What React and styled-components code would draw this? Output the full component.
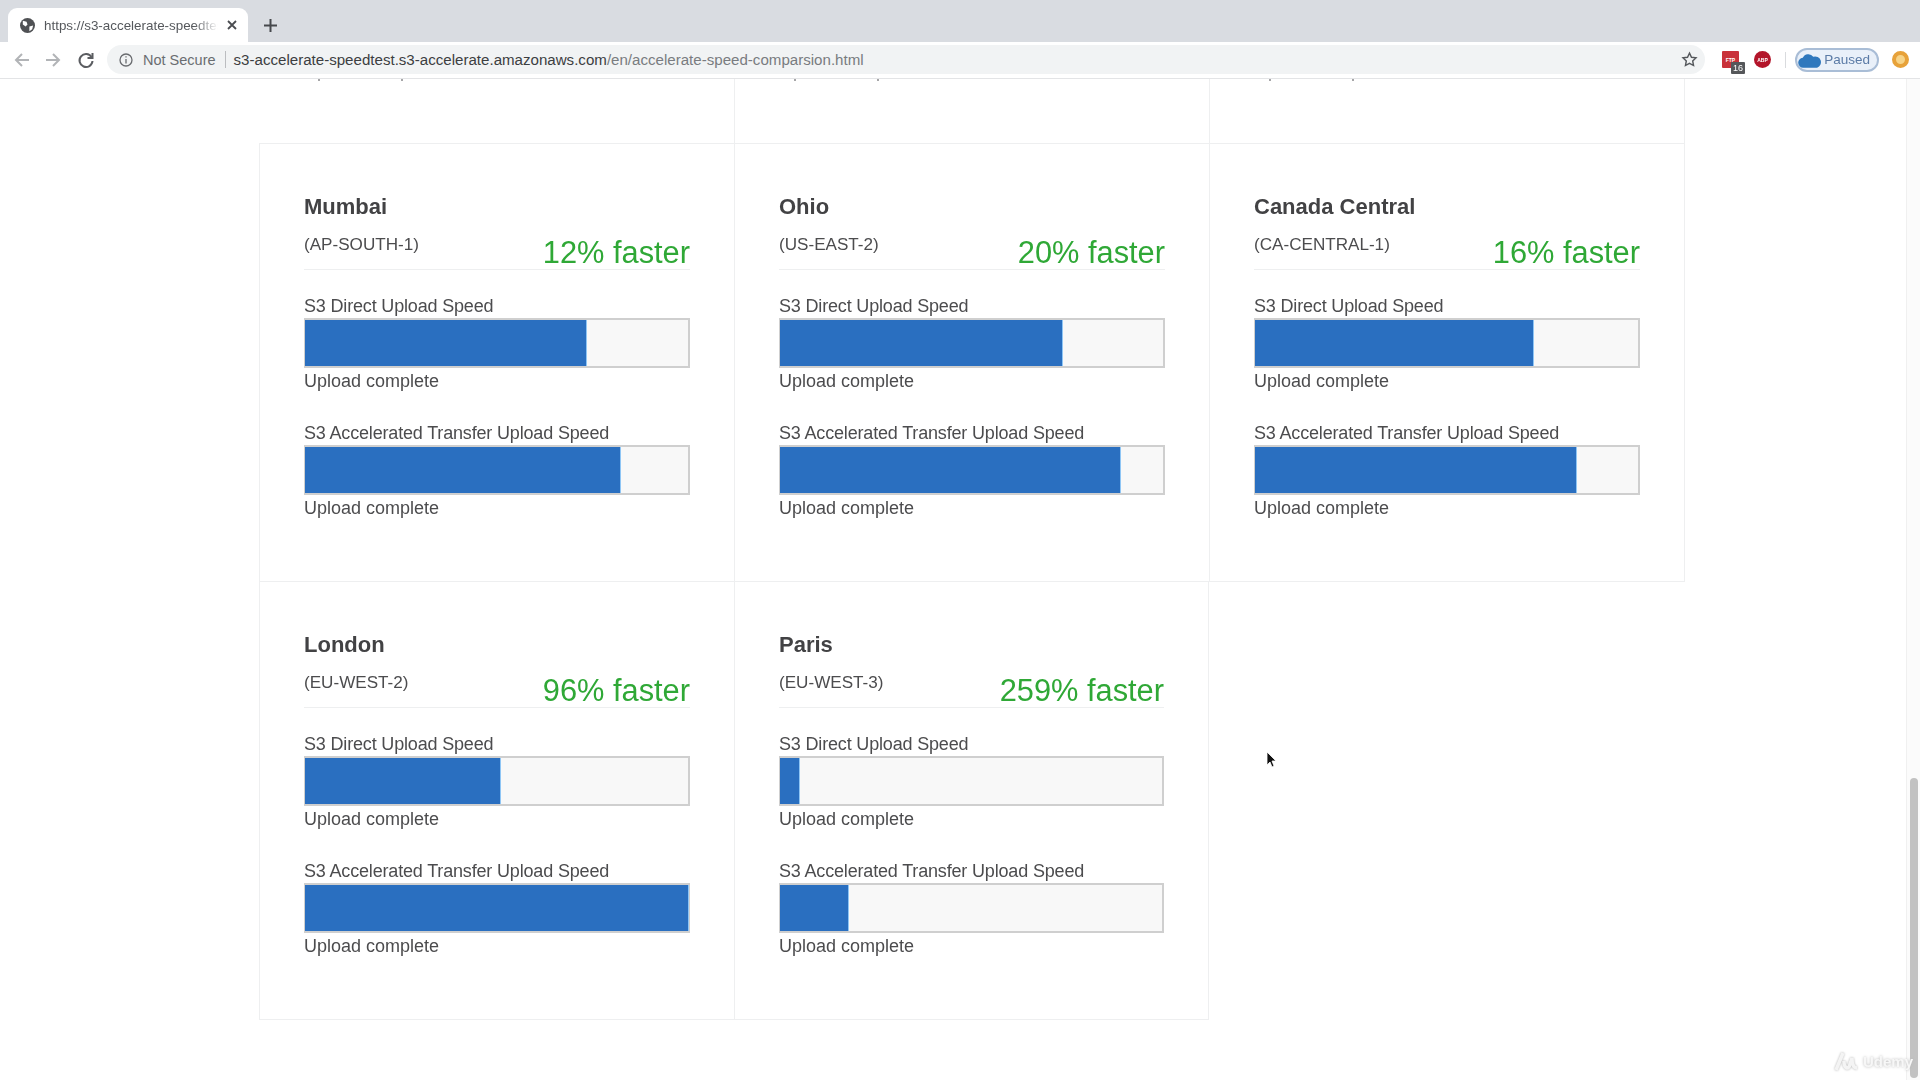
import React from 'react';
import styled, { createGlobalStyle } from 'styled-components';

const GlobalStyle = createGlobalStyle`
  html, body {
    margin: 0;
    height: 100%;
    overflow: hidden;
    background: #fff;
  }
  body {
    font-family: "Liberation Sans", Arial, sans-serif;
    color: #444;
  }
`;

const regions = [
  { name: 'Mumbai', code: 'AP-SOUTH-1', faster: 12, direct: 73.3, accel: 82.3 },
  { name: 'Ohio', code: 'US-EAST-2', faster: 20, direct: 73.7, accel: 88.7 },
  { name: 'Canada Central', code: 'CA-CENTRAL-1', faster: 16, direct: 72.6, accel: 83.9 },
  { name: 'London', code: 'EU-WEST-2', faster: 96, direct: 51, accel: 100 },
  { name: 'Paris', code: 'EU-WEST-3', faster: 259, direct: 4.9, accel: 17.8 },
];

// the reference is a frame of a video, so everything is a little soft
const Window = styled.div`
  position: relative;
  width: 1920px;
  height: 1080px;
  display: flex;
  flex-direction: column;
  overflow: hidden;
  filter: blur(0.45px);
`;

const TabStrip = styled.div`
  height: 42px;
  flex: none;
  box-sizing: border-box;
  padding: 8px 0 0 8px;
  background: #d9dce1;
  display: flex;
  align-items: stretch;
`;

const Tab = styled.div`
  width: 240px;
  box-sizing: border-box;
  padding: 0 11px 0 12px;
  background: #fff;
  border-radius: 9px 9px 0 0;
  display: flex;
  align-items: center;
  gap: 9px;
`;

const TabTitle = styled.div`
  flex: 1;
  font-size: 13.4px;
  color: #55585c;
  white-space: nowrap;
  overflow: hidden;
  -webkit-mask-image: linear-gradient(to right, #000 86%, transparent);
  mask-image: linear-gradient(to right, #000 86%, transparent);
`;

const NewTab = styled.div`
  margin-left: 12px;
  width: 20px;
  display: flex;
  align-items: center;
  justify-content: center;
`;

const Toolbar = styled.div`
  height: 37px;
  flex: none;
  box-sizing: border-box;
  border-bottom: 1px solid #e3e4e6;
  background: #fff;
  display: flex;
  align-items: center;
  padding: 0 0 1px 13px;
`;

const NavIcon = styled.svg`
  flex: none;
  width: 18px;
  height: 18px;
  margin-right: ${(p) => p.$gap}px;
  fill: none;
  stroke: ${(p) => p.$color};
  stroke-width: 2;
`;

const Omnibox = styled.div`
  width: 1598px;
  height: 29px;
  margin-left: 12px;
  box-sizing: border-box;
  padding: 0 7px 0 12px;
  border-radius: 15px;
  background: #f1f3f4;
  display: flex;
  align-items: center;
  white-space: nowrap;
`;

const NotSecure = styled.span`
  margin-left: 10px;
  color: #6a6d71;
  font-size: 14.5px;
`;

const Divider = styled.span`
  width: 1px;
  height: 17px;
  margin: 0 8px 0 9px;
  background: #bbbdc0;
`;

const Host = styled.span`
  color: #3c3e41;
  font-size: 15.1px;
`;

const Path = styled.span`
  color: #797c80;
  font-size: 15.1px;
`;

const Star = styled.svg`
  margin-left: auto;
  width: 17px;
  height: 17px;
  fill: none;
  stroke: #55585c;
  stroke-width: 2;
`;

const Extension = styled.div`
  position: relative;
  flex: none;
  width: 17px;
  height: 17px;
  margin-left: ${(p) => p.$left}px;
  background: ${(p) => p.$color};
  border-radius: ${(p) => (p.$round ? '50%' : '1px')};
  color: #fff;
  font-size: 5px;
  font-weight: 700;
  display: flex;
  align-items: center;
  justify-content: center;
`;

const CountBadge = styled.span`
  position: absolute;
  right: -6px;
  bottom: -6px;
  width: 14px;
  height: 12px;
  border-radius: 1px;
  background: #55575a;
  font-size: 9px;
  font-weight: 400;
  line-height: 12px;
  text-align: center;
`;

const ToolbarRule = styled.span`
  width: 1px;
  height: 16px;
  margin-left: 14px;
  background: #d9dbde;
`;

const PausedChip = styled.div`
  flex: none;
  width: 84px;
  height: 24px;
  margin-left: 9px;
  box-sizing: border-box;
  padding: 0 7px 0 1px;
  border: 2px solid #a9bdd6;
  border-radius: 12px;
  background: #e9f0f9;
  color: #5b7ba6;
  font-size: 13.5px;
  display: flex;
  align-items: center;
  justify-content: space-between;
`;

const Coin = styled.div`
  flex: none;
  width: 17px;
  height: 17px;
  margin-left: 13px;
  box-sizing: border-box;
  border: 4px solid #e7a23a;
  border-radius: 50%;
  background: #f7d488;
`;

const Viewport = styled.div`
  flex: 1;
  min-height: 0;
  display: flex;
  overflow: hidden;
`;

const Page = styled.div`
  flex: 1;
  padding-left: 259px;
`;

const Grid = styled.div`
  display: grid;
  grid-template-columns: 475px 475px 476px;
  grid-template-rows: 65px 438px 438px;
`;

const Stub = styled.div`
  box-sizing: border-box;
  display: flex;
  align-items: flex-start;
  gap: 81px;
  padding-left: 59px;
  border-left: ${(p) => (p.$first ? '0' : '1px solid #eeeff0')};
  border-right: ${(p) => (p.$last ? '1px solid #eeeff0' : '0')};
  border-bottom: 1px solid #eeeff0;
`;

// bottoms of the brackets of the row scrolled out of view
const ClippedMark = styled.span`
  width: 2px;
  height: 2px;
  background: #a6a6a8;
`;

const Card = styled.div`
  box-sizing: border-box;
  padding: 48px 44px 0 44px;
  border-left: 1px solid #eeeff0;
  border-bottom: 1px solid #eeeff0;
  border-right: ${(p) => (p.$edge ? '1px solid #eeeff0' : '0')};
`;

const City = styled.div`
  height: 30px;
  font-size: 22px;
  line-height: 30px;
  font-weight: 700;
  color: #424244;
`;

const Heading = styled.div`
  height: 46px;
  margin-top: 2px;
  box-sizing: border-box;
  border-bottom: 1px solid #eeeff0;
  display: flex;
  justify-content: space-between;
  align-items: flex-start;
`;

const Code = styled.div`
  margin-top: 10px;
  font-size: 17.1px;
  line-height: 22px;
  color: #4c4c4e;
`;

const Faster = styled.div`
  margin-top: 12px;
  font-size: 30.8px;
  line-height: 34px;
  color: #2fa836;
`;

const Measure = styled.div`
  margin-top: ${(p) => p.$top}px;
`;

const MeasureLabel = styled.div`
  font-size: 18px;
  line-height: 20px;
  letter-spacing: -0.17px;
  color: #4c4c4e;
`;

const Bar = styled.div`
  height: 50px;
  box-sizing: border-box;
  margin-top: 2px;
  border: 2px solid #cfcfcf;
  border-left-width: 1px;
  background: #f8f8f8;
`;

const Fill = styled.div`
  height: 100%;
  background: #2a6fc0;
  box-shadow: 1px 0 0 #8fc6f5;
`;

const Status = styled.div`
  margin-top: 1px;
  font-size: 18px;
  line-height: 24px;
  color: #4c4c4e;
`;

const ScrollTrack = styled.div`
  flex: none;
  width: 14px;
  box-sizing: border-box;
  padding: 699px 2px 2px 3px;
  border-left: 1px solid #f0f0f0;
  background: #fbfbfb;
`;

const ScrollThumb = styled.div`
  height: 100%;
  border-radius: 4px;
  background: #c2c2c2;
`;

const Cursor = styled.svg`
  position: absolute;
  left: 1266px;
  top: 751px;
  width: 12px;
  height: 18px;
`;

const Watermark = styled.div`
  position: absolute;
  right: 7px;
  bottom: 8px;
  display: flex;
  align-items: center;
  gap: 4px;
  color: #f7f7f7;
  font-size: 15px;
  font-weight: 700;
  text-shadow: 0 0 3px #b5b5b5;
`;

function Measurement({ label, value, top }) {
  return (
    <Measure $top={top}>
      <MeasureLabel>{label}</MeasureLabel>
      <Bar>
        <Fill style={{ width: `${value}%` }} />
      </Bar>
      <Status>Upload complete</Status>
    </Measure>
  );
}

function RegionCard({ region, edge }) {
  return (
    <Card $edge={edge}>
      <City>{region.name}</City>
      <Heading>
        <Code>({region.code})</Code>
        <Faster>{region.faster}% faster</Faster>
      </Heading>
      <Measurement label="S3 Direct Upload Speed" value={region.direct} top={26} />
      <Measurement label="S3 Accelerated Transfer Upload Speed" value={region.accel} top={30} />
    </Card>
  );
}

export default function App() {
  return (
    <Window>
      <GlobalStyle />
      <TabStrip>
        <Tab>
          <svg width="15" height="15" viewBox="0 0 16 16">
            <circle cx="8" cy="8" r="8" fill="#4f5154" />
            <path d="M3 3l4 1 1 3-2 2-3-2zM10 9l4-1-1 4-3 2z" fill="#fff" />
          </svg>
          <TabTitle>https://s3-accelerate-speedtest</TabTitle>
          <svg width="10" height="10" viewBox="0 0 10 10" stroke="#4a4c50" strokeWidth="1.8">
            <path d="M1 1l8 8M9 1l-8 8" />
          </svg>
        </Tab>
        <NewTab>
          <svg width="13" height="13" viewBox="0 0 13 13" stroke="#46484c" strokeWidth="2">
            <path d="M6.5 0v13M0 6.5h13" />
          </svg>
        </NewTab>
      </TabStrip>
      <Toolbar>
        <NavIcon viewBox="0 0 18 18" $gap={13} $color="#b2b4b7">
          <path d="M16 9H3M9 3L3 9l6 6" />
        </NavIcon>
        <NavIcon viewBox="0 0 18 18" $gap={15} $color="#b2b4b7">
          <path d="M2 9h13M9 3l6 6-6 6" />
        </NavIcon>
        <NavIcon viewBox="0 0 18 18" $gap={0} $color="#5b5d61">
          <path d="M14.5 6A6.5 6.5 0 1 0 15.5 10" />
          <path d="M15.5 2v5h-5" />
        </NavIcon>
        <Omnibox>
          <svg width="14" height="14" viewBox="0 0 14 14" fill="none" stroke="#696b6f" strokeWidth="1.3">
            <circle cx="7" cy="7" r="6" />
            <path d="M7 6v4.5M7 3.2v1.4" />
          </svg>
          <NotSecure>Not Secure</NotSecure>
          <Divider />
          <Host>s3-accelerate-speedtest.s3-accelerate.amazonaws.com</Host>
          <Path>/en/accelerate-speed-comparsion.html</Path>
          <Star viewBox="0 0 24 24">
            <path d="M12 3l2.8 5.9 6.4.8-4.7 4.4 1.2 6.4L12 17.4l-5.7 3.1 1.2-6.4-4.7-4.4 6.4-.8z" />
          </Star>
        </Omnibox>
        <Extension $left={17} $color="#c9323a">
          FTP
          <CountBadge>16</CountBadge>
        </Extension>
        <Extension $left={15} $color="#b3152a" $round>
          ABP
        </Extension>
        <ToolbarRule />
        <PausedChip>
          <svg width="24" height="16" viewBox="0 0 22 14">
            <path d="M5 14a4.5 4.5 0 0 1-.6-9A5.5 5.5 0 0 1 14 4a4.5 4.5 0 0 1 3.5 10z" fill="#2f78bd" />
          </svg>
          Paused
        </PausedChip>
        <Coin />
      </Toolbar>
      <Viewport>
        <Page>
          <Grid>
            <Stub $first>
              <ClippedMark />
              <ClippedMark />
            </Stub>
            <Stub>
              <ClippedMark />
              <ClippedMark />
            </Stub>
            <Stub $last>
              <ClippedMark />
              <ClippedMark />
            </Stub>
            {regions.map((region, i) => (
              <RegionCard key={region.name} region={region} edge={i === 2 || i === 4} />
            ))}
          </Grid>
        </Page>
        <ScrollTrack>
          <ScrollThumb />
        </ScrollTrack>
      </Viewport>
      <Cursor viewBox="0 0 12 18">
        <path d="M1 1v13l3-3 2 5 2-1-2-5h4z" fill="#111" stroke="#fff" strokeWidth="0.8" />
      </Cursor>
      <Watermark>
        <svg width="26" height="22" viewBox="0 0 26 22" fill="none" stroke="#f4f4f4" strokeWidth="3.5" style={{ filter: 'drop-shadow(0 0 1px #b5b5b5)' }}>
          <path d="M3 20L10 3M11 11c0 8 5 9 6 3l2-6c0 8 2 10 5 10" />
        </svg>
        Udemy
      </Watermark>
    </Window>
  );
}
